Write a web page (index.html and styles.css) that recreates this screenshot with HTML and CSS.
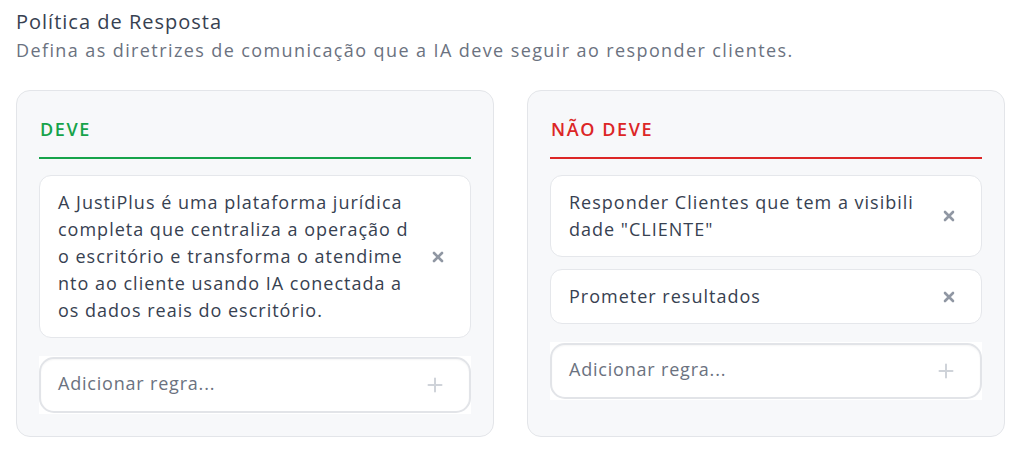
FILE: index.html
```html
<!DOCTYPE html>
<html lang="pt-BR">
<head>
<meta charset="utf-8">
<link rel="stylesheet" href="styles.css">
</head>
<body>
<div class="page">
  <header class="intro">
    <h1 class="title">Política de Resposta</h1>
    <p class="subtitle">Defina as diretrizes de comunicação que a IA deve seguir ao responder clientes.</p>
  </header>
  <div class="columns">
    <section class="card">
      <h2 class="card-head head-do">DEVE</h2>
      <div class="list">
        <div class="rule">
          <span class="rule-text">A JustiPlus é uma plataforma jurídica completa que centraliza a operação do escritório e transforma o atendimento ao cliente usando IA conectada aos dados reais do escritório.</span>
          <button class="rule-del" aria-label="Remover"><svg width="12" height="12" viewBox="0 0 12 12"><path d="M2 2L10 10M10 2L2 10" stroke="currentColor" stroke-width="2.6" stroke-linecap="round"/></svg></button>
        </div>
      </div>
      <div class="add">
        <div class="add-box">
          <span class="add-placeholder">Adicionar regra...</span>
          <span class="add-plus"><svg width="16" height="16" viewBox="0 0 16 16"><path d="M8 1.5V14.5M1.5 8H14.5" stroke="currentColor" stroke-width="2" stroke-linecap="round"/></svg></span>
        </div>
      </div>
    </section>
    <section class="card">
      <h2 class="card-head head-dont">NÃO DEVE</h2>
      <div class="list">
        <div class="rule">
          <span class="rule-text">Responder Clientes que tem a visibilidade "CLIENTE"</span>
          <button class="rule-del" aria-label="Remover"><svg width="12" height="12" viewBox="0 0 12 12"><path d="M2 2L10 10M10 2L2 10" stroke="currentColor" stroke-width="2.6" stroke-linecap="round"/></svg></button>
        </div>
        <div class="rule">
          <span class="rule-text">Prometer resultados</span>
          <button class="rule-del" aria-label="Remover"><svg width="12" height="12" viewBox="0 0 12 12"><path d="M2 2L10 10M10 2L2 10" stroke="currentColor" stroke-width="2.6" stroke-linecap="round"/></svg></button>
        </div>
      </div>
      <div class="add">
        <div class="add-box">
          <span class="add-placeholder">Adicionar regra...</span>
          <span class="add-plus"><svg width="16" height="16" viewBox="0 0 16 16"><path d="M8 1.5V14.5M1.5 8H14.5" stroke="currentColor" stroke-width="2" stroke-linecap="round"/></svg></span>
        </div>
      </div>
    </section>
  </div>
</div>
</body>
</html>
```

FILE: styles.css
```css
* { box-sizing: border-box; }
html, body { margin: 0; padding: 0; background: #ffffff; }
body {
  font-family: "Open Sans", "Liberation Sans", sans-serif;
  color: #374151;
}
.page {
  padding: 8px 21px 0 16px;
}
.intro { margin: 0 0 28px 0; }
.title {
  margin: 0;
  font-size: 20px;
  font-weight: 400;
  line-height: 28px;
  letter-spacing: 1px;
  color: #374151;
}
.subtitle {
  margin: 2px 0 0 0;
  font-size: 18px;
  line-height: 24px;
  color: #6b7280;
  letter-spacing: 1.4px;
}
.columns {
  display: grid;
  grid-template-columns: 1fr 1fr;
  gap: 33px;
}
.card {
  background: #f7f8fa;
  border: 1px solid #e3e5e9;
  border-radius: 14px;
  padding: 26px 22px 22px 22px;
  display: flex;
  flex-direction: column;
}
.card-head {
  margin: 0 0 16px 0;
  padding: 0 0 16px 1px;
  font-size: 18px;
  line-height: 24px;
  font-weight: 600;
  letter-spacing: 1.6px;
}
.head-do { color: #16a34a; border-bottom: 2px solid #16a34a; }
.head-dont { color: #dc2626; border-bottom: 2px solid #dc2626; }
.list {
  display: flex;
  flex-direction: column;
  gap: 12px;
}
.rule {
  background: #ffffff;
  border: 1px solid #e5e7eb;
  border-radius: 12px;
  padding: 13px 16px 13px 18px;
  display: flex;
  align-items: center;
  gap: 6px;
}
.rule-text {
  flex: 0 0 354px;
  font-size: 18px;
  line-height: 27px;
  letter-spacing: 1px;
  color: #374151;
  word-break: break-all;
}
.rule-del {
  margin-left: auto;
  width: 32px;
  height: 24px;
  border: 0;
  padding: 0;
  background: transparent;
  color: #9097a3;
  display: flex;
  align-items: center;
  justify-content: center;
}
.add {
  margin-top: 18px;
  background: #ffffff;
  padding: 1px 0;
}
.add-box {
  height: 56px;
  border: 2px solid #e2e4e8;
  border-radius: 15px;
  box-shadow: inset 0 1px 2px rgba(0,0,0,0.04);
  display: flex;
  align-items: center;
  padding: 0 26px 0 17px;
}
.add-placeholder {
  flex: 1;
  font-size: 18px;
  letter-spacing: 0.8px;
  color: #6b7280;
  padding-bottom: 4px;
}
.add-plus {
  color: #cfd3d9;
  display: flex;
}
```
